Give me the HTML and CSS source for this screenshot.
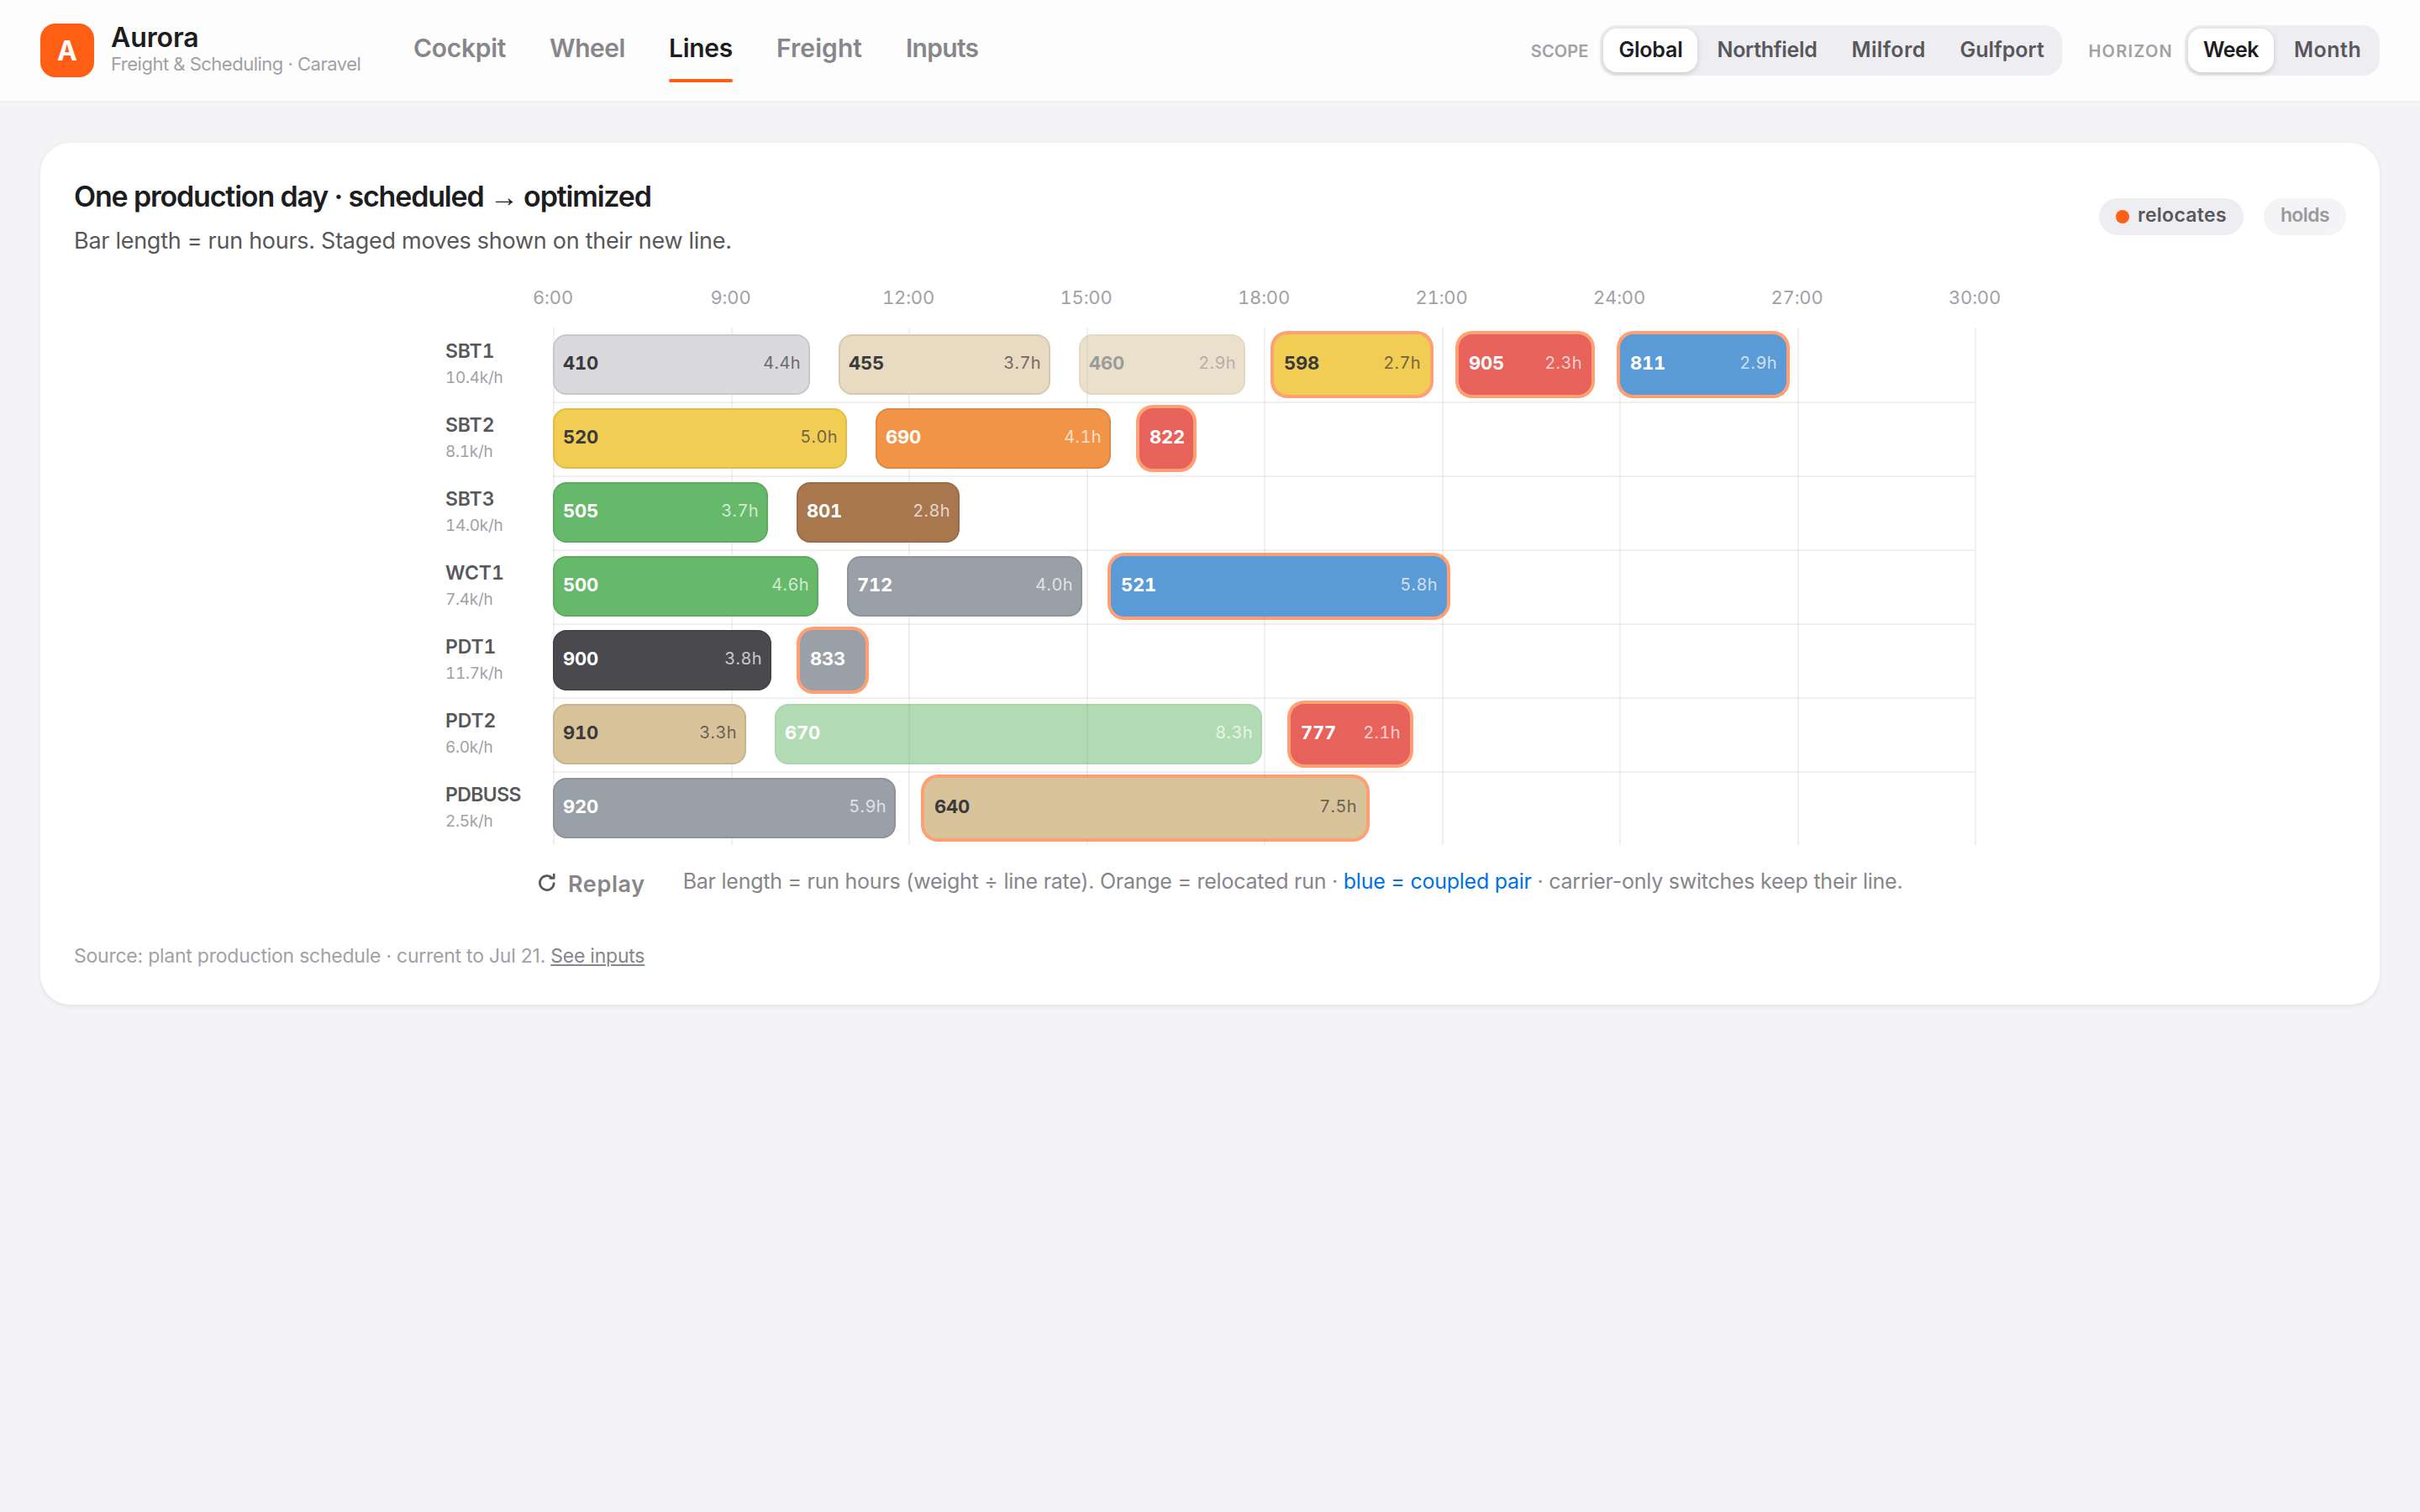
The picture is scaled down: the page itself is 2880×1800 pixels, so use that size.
FILE: index.html
```html
<!DOCTYPE html>
<html lang="en">
<head>
<meta charset="utf-8">
<title>Aurora</title>
<link rel="stylesheet" href="styles.css">
</head>
<body>
<header class="topbar">
  <div class="brand">
    <div class="logo">A</div>
    <div class="brand-text">
      <div class="brand-name">Aurora</div>
      <div class="brand-sub">Freight &amp; Scheduling · Caravel</div>
    </div>
  </div>
  <nav class="nav">
    <a class="nav-item cockpit">Cockpit</a>
    <a class="nav-item wheel">Wheel</a>
    <a class="nav-item lines active">Lines</a>
    <a class="nav-item freight">Freight</a>
    <a class="nav-item inputs">Inputs</a>
  </nav>
  <div class="filters">
    <span class="filter-label">SCOPE</span>
    <div class="segmented">
      <button class="seg global on">Global</button>
      <button class="seg northfield">Northfield</button>
      <button class="seg milford">Milford</button>
      <button class="seg gulfport">Gulfport</button>
    </div>
    <span class="filter-label horizon">HORIZON</span>
    <div class="segmented">
      <button class="seg week on">Week</button>
      <button class="seg month">Month</button>
    </div>
  </div>
</header>
<main class="page">
  <section class="card">
    <div class="card-head">
      <div>
        <h2 class="title">One production day · scheduled <span class="arrow">→</span> optimized</h2>
        <p class="subtitle">Bar length = run hours. Staged moves shown on their new line.</p>
      </div>
      <div class="legend">
        <span class="chip"><i class="dot"></i><span class="chip-text wide">relocates</span></span>
        <span class="chip faded"><span class="chip-text">holds</span></span>
      </div>
    </div>
    <div class="gantt">
      <div class="axis">
        <span class="tick">6:00</span><span class="tick">9:00</span><span class="tick">12:00</span><span class="tick">15:00</span><span class="tick">18:00</span><span class="tick">21:00</span><span class="tick">24:00</span><span class="tick">27:00</span><span class="tick">30:00</span>
      </div>
      <div class="rows">
        <div class="gridlines"><i></i><i></i><i></i><i></i><i></i><i></i><i></i><i></i><i></i></div>
        <div class="row">
          <div class="line"><b>SBT1</b><small>10.4k/h</small></div>
          <div class="track">
            <div class="bar silver" style="width:306px"><b>410</b><span>4.4h</span></div>
            <div class="bar sand" style="width:252px"><b>455</b><span>3.7h</span></div>
            <div class="bar tan held" style="width:198px"><b>460</b><span>2.9h</span></div>
            <div class="bar yellow moved" style="width:186px"><b>598</b><span>2.7h</span></div>
            <div class="bar red moved" style="width:158px"><b>905</b><span>2.3h</span></div>
            <div class="bar blue moved" style="width:198px"><b>811</b><span>2.9h</span></div>
          </div>
        </div>
        <div class="row">
          <div class="line"><b>SBT2</b><small>8.1k/h</small></div>
          <div class="track">
            <div class="bar yellow" style="width:350px"><b>520</b><span>5.0h</span></div>
            <div class="bar orange" style="width:280px"><b>690</b><span>4.1h</span></div>
            <div class="bar red moved" style="width:64px"><b>822</b></div>
          </div>
        </div>
        <div class="row">
          <div class="line"><b>SBT3</b><small>14.0k/h</small></div>
          <div class="track">
            <div class="bar green" style="width:256px"><b>505</b><span>3.7h</span></div>
            <div class="bar brown" style="width:194px"><b>801</b><span>2.8h</span></div>
          </div>
        </div>
        <div class="row">
          <div class="line"><b>WCT1</b><small>7.4k/h</small></div>
          <div class="track">
            <div class="bar green" style="width:316px"><b>500</b><span>4.6h</span></div>
            <div class="bar gray" style="width:280px"><b>712</b><span>4.0h</span></div>
            <div class="bar blue moved" style="width:400px"><b>521</b><span>5.8h</span></div>
          </div>
        </div>
        <div class="row">
          <div class="line"><b>PDT1</b><small>11.7k/h</small></div>
          <div class="track">
            <div class="bar black" style="width:260px"><b>900</b><span>3.8h</span></div>
            <div class="bar gray moved" style="width:78px"><b>833</b></div>
          </div>
        </div>
        <div class="row">
          <div class="line"><b>PDT2</b><small>6.0k/h</small></div>
          <div class="track">
            <div class="bar tan" style="width:230px"><b>910</b><span>3.3h</span></div>
            <div class="bar green held" style="width:580px"><b>670</b><span>8.3h</span></div>
            <div class="bar red moved" style="width:142px"><b>777</b><span>2.1h</span></div>
          </div>
        </div>
        <div class="row">
          <div class="line long"><b>PDBUSS</b><small>2.5k/h</small></div>
          <div class="track">
            <div class="bar gray" style="width:408px"><b>920</b><span>5.9h</span></div>
            <div class="bar tan moved" style="width:526px"><b>640</b><span>7.5h</span></div>
          </div>
        </div>
      </div>
      <div class="gantt-foot">
        <button class="replay">
          <svg class="replay-icon" viewBox="0 0 22 22"><path d="M19.2 10.6A8.4 8.4 0 1 1 17 4.4"/><path d="M19.2 0V4.4H14.8"/></svg>
          <span>Replay</span>
        </button>
        <p class="note">Bar length = run hours (weight ÷ line rate). Orange = relocated run · <em>blue = coupled pair</em> · carrier-only switches keep their line.</p>
      </div>
    </div>
    <p class="source">Source: plant production schedule · current to Jul 21. <a>See inputs</a></p>
  </section>
</main>
</body>
</html>
```
FILE: styles.css
```css
* { box-sizing: border-box; }
body {
  margin: 0;
  background: #f4f4f7;
  color: #1d1d1f;
  font-family: Inter, "Liberation Sans", sans-serif;
}
h2, p { margin: 0; }
button { border: 0; background: none; font: inherit; color: inherit; padding: 0; }

/* Top bar */
.topbar {
  height: 122px;
  padding: 0 48px;
  display: flex;
  align-items: center;
  background: #fdfdfd;
  border-bottom: 2px solid #efeff0;
}
.brand { display: flex; align-items: center; gap: 20px; }
.logo {
  width: 64px;
  height: 64px;
  border-radius: 18px;
  background: #ff5f15;
  color: #fff;
  font-size: 32px;
  font-weight: 700;
  display: flex;
  align-items: center;
  justify-content: center;
}
.brand-text { padding-bottom: 3px; width: 298px; white-space: nowrap; }
.brand-name { font-size: 32px; font-weight: 600; line-height: 34px; letter-spacing: -0.1px; }
.brand-sub { font-size: 22px; line-height: 28px; letter-spacing: -0.5px; color: #a1a1a6; }

.nav { display: flex; gap: 52px; margin-left: 62px; }
.nav-item {
  font-size: 30px;
  font-weight: 600;
  line-height: 34px;
  padding: 18px 0 20px;
  position: relative;
  height: 76px;
  color: #86868b;
}
.nav-item.active { color: #1d1d1f; }
.nav-item.active::after {
  content: "";
  position: absolute;
  left: 0;
  right: 0;
  bottom: 0;
  height: 4px;
  border-radius: 2px;
  background: #ff5f15;
}
.cockpit { width: 110px; letter-spacing: -0.3px; }
.wheel { width: 90px; letter-spacing: -0.46px; }
.lines { width: 76px; letter-spacing: -0.28px; }
.freight { width: 102px; letter-spacing: 0.07px; }
.inputs { width: 86px; letter-spacing: -0.7px; }

.filters { margin-left: auto; display: flex; align-items: center; gap: 14px; }
.filter-label { padding-top: 2px; font-size: 20px; font-weight: 600; letter-spacing: 0.1px; color: #a1a1a6; }
.filter-label.horizon { margin-left: 17px; letter-spacing: 1.25px; }
.segmented { display: flex; gap: 4px; padding: 4px; background: #eeedf2; border-radius: 20px; }
.seg {
  height: 52px;
  padding: 0 0 2px 18px;
  text-align: left;
  border-radius: 16px;
  font-size: 25px;
  font-weight: 600;
  color: #58585c;
}
.seg.on { background: #fff; color: #1d1d1f; box-shadow: 0 2px 6px rgba(0, 0, 0, 0.16); }
.global { width: 112px; letter-spacing: -0.2px; }
.northfield { width: 156px; padding-left: 19px; letter-spacing: -0.3px; }
.milford { width: 126px; padding-left: 19px; letter-spacing: 0.4px; }
.gulfport { width: 136px; letter-spacing: 0; }
.week { width: 102px; letter-spacing: -0.5px; }
.month { width: 118px; padding-left: 20px; letter-spacing: 0.5px; }

/* Card */
.page { padding: 48px; }
.card {
  background: #fff;
  border-radius: 36px;
  padding: 40px;
  height: 1026px;
  box-shadow: 0 2px 6px rgba(0, 0, 0, 0.08);
}
.card-head { display: flex; justify-content: space-between; align-items: center; }
.title { font-size: 34px; font-weight: 600; line-height: 48px; letter-spacing: -1.18px; }
.arrow { font-family: "Liberation Sans", sans-serif; font-weight: 400; }
.subtitle { font-size: 27px; line-height: 38px; margin-top: 10px; letter-spacing: -0.28px; color: #58585c; }
.legend { display: flex; gap: 24px; }
.chip {
  height: 44px;
  padding: 0 20px;
  border-radius: 22px;
  background: #eeedf2;
  color: #58585c;
  font-size: 23px;
  font-weight: 600;
  display: flex;
  align-items: center;
  gap: 10px;
}
.chip.faded { opacity: 0.6; }
.chip-text { padding-bottom: 4px; letter-spacing: -0.6px; }
.chip-text.wide { letter-spacing: 0.3px; }
.dot { width: 16px; height: 16px; border-radius: 50%; background: #ff5f15; }

/* Gantt chart */
.gantt { width: 1820px; margin: 34px auto 0; }
.axis {
  margin-left: 128px;
  height: 50px;
  display: flex;
  justify-content: space-between;
  font-size: 22px;
  line-height: 28px;
  letter-spacing: -0.2px;
  color: #a1a1a6;
  font-variant-numeric: tabular-nums;
}
.tick { width: 0; display: flex; justify-content: center; white-space: nowrap; }
.rows { position: relative; }
.gridlines {
  position: absolute;
  inset: 0 -2px 0 128px;
  display: flex;
  justify-content: space-between;
}
.gridlines i { width: 2px; background: rgba(0, 0, 0, 0.06); }
.row { height: 88px; display: flex; position: relative; }
.line { width: 128px; padding-top: 14px; font-variant-numeric: tabular-nums; }
.line b { display: block; font-size: 23px; font-weight: 600; line-height: 28px; letter-spacing: -0.1px; color: #58585c; }
.line.long b { letter-spacing: -0.6px; }
.line small { display: block; font-size: 19px; line-height: 24px; margin-top: 6px; letter-spacing: -0.3px; color: #a1a1a6; }
.track { flex: 1; display: flex; gap: 34px; padding-top: 8px; }
.row + .row .track { box-shadow: inset 0 2px rgba(0, 0, 0, 0.06); }
.bar {
  height: 72px;
  padding: 0 11px 4px 12px;
  border-radius: 16px;
  display: flex;
  align-items: center;
  justify-content: space-between;
  color: #fff;
  font-variant-numeric: tabular-nums;
  box-shadow: inset 0 0 0 2px rgba(0, 0, 0, 0.08);
}
.bar b { font-size: 22px; font-weight: 700; letter-spacing: -0.2px; }
.bar span { font-size: 20px; letter-spacing: 0.4px; opacity: 0.7; }
.bar.moved { box-shadow: 0 0 0 4px rgba(255, 95, 21, 0.6); }
.bar.held { opacity: 0.5; }
.silver { background: #dad9de; }
.sand { background: #e8dbc1; }
.tan { background: #d8c39a; }
.yellow { background: #f1cd54; }
.orange { background: #f19448; }
.red { background: #e8625c; }
.blue { background: #5a9ad6; }
.green { background: #66b96a; }
.brown { background: #a9774e; }
.gray { background: #99a0a8; }
.black { background: #4a494e; }
.silver, .sand, .tan, .yellow { color: #3a3a3c; }

.gantt-foot { display: flex; margin-top: 28px; padding-left: 110px; }
.replay {
  display: flex;
  align-items: center;
  gap: 14px;
  height: 36px;
  font-size: 27px;
  font-weight: 600;
  letter-spacing: 0.6px;
  color: #86868b;
}
.replay-icon {
  width: 22px;
  height: 22px;
  overflow: visible;
  fill: none;
  stroke: #58585c;
  stroke-width: 2.7;
  stroke-linecap: round;
  stroke-linejoin: round;
}
.note {
  font-size: 25px;
  line-height: 30px;
  margin-left: 45px;
  letter-spacing: -0.25px;
  color: #86868b;
  white-space: nowrap;
}
.note em { font-style: normal; color: #0071e3; }
.source { font-size: 23px; line-height: 28px; margin-top: 54px; letter-spacing: -0.24px; color: #a1a1a6; }
.source a { color: #86868b; text-decoration: underline; }
```
